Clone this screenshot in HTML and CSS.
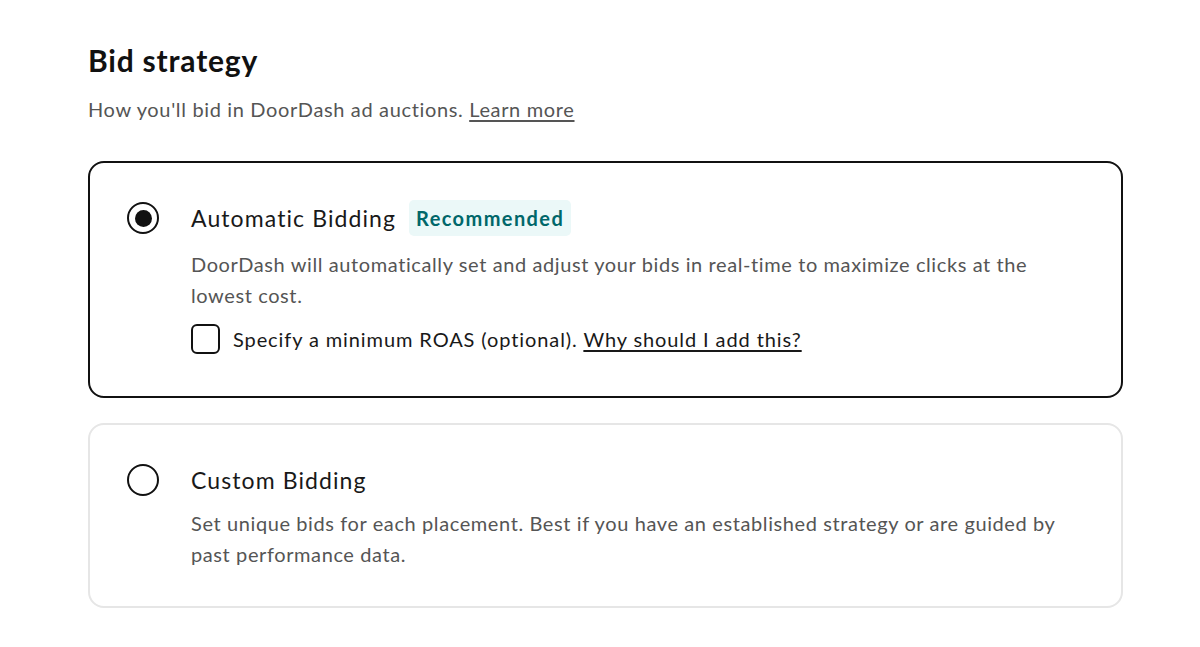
FILE: index.html
```html
<!DOCTYPE html>
<html lang="en">
<head>
  <meta charset="UTF-8">
  <meta name="viewport" content="width=device-width, initial-scale=1.0">
  <title>Bid strategy</title>
  <link rel="stylesheet" href="styles.css">
</head>
<body>
  <div class="section">
    <h1 class="section-title">Bid strategy</h1>
    <p class="section-sub">How you'll bid in DoorDash ad auctions. <a href="#" class="link">Learn more</a></p>

    <div class="option selected">
      <div class="radio checked"><span class="dot"></span></div>
      <div class="option-body">
        <div class="option-head">
          <span class="option-title">Automatic Bidding</span>
          <span class="badge">Recommended</span>
        </div>
        <p class="option-desc">DoorDash will automatically set and adjust your bids in real-time to maximize clicks at the lowest cost.</p>
        <label class="check-row">
          <span class="checkbox"></span>
          <span>Specify a minimum ROAS (optional). <a href="#" class="link dark">Why should I add this?</a></span>
        </label>
      </div>
    </div>

    <div class="option">
      <div class="radio"></div>
      <div class="option-body">
        <div class="option-head">
          <span class="option-title">Custom Bidding</span>
        </div>
        <p class="option-desc">Set unique bids for each placement. Best if you have an established strategy or are guided by past performance data.</p>
      </div>
    </div>
  </div>
</body>
</html>
```

FILE: styles.css
```css
body {
  font-family: 'Lato', 'Open Sans', sans-serif;
  background-color: #fff;
  margin: 0;
  padding: 0;
  color: #191919;
  letter-spacing: 0.65px;
}
.section {
  padding: 42px 77px 0 88px;
}
.section-title {
  margin: 0;
  font-size: 30px;
  font-weight: 700;
  line-height: 36px;
  letter-spacing: 0.8px;
  color: #111;
}
.section-sub {
  margin: 16px 0 37px;
  font-size: 20px;
  line-height: 30px;
  color: #555;
}
.link {
  color: #555;
  text-decoration: underline;
  text-underline-offset: 3px;
}
.link.dark {
  color: #191919;
}
.option {
  display: flex;
  gap: 32px;
  border: 2px solid #e6e6e6;
  border-radius: 16px;
  padding: 37px 37px 36px;
  margin-bottom: 25px;
}
.option.selected {
  border-color: #111;
  padding-bottom: 42px;
}
.radio {
  flex: none;
  width: 32px;
  height: 32px;
  box-sizing: border-box;
  border: 2.5px solid #111;
  border-radius: 50%;
  display: flex;
  align-items: center;
  justify-content: center;
  margin-top: 2px;
}
.radio .dot {
  width: 17px;
  height: 17px;
  border-radius: 50%;
  background: #111;
}
.option-body {
  flex: 1;
}
.option-head {
  display: flex;
  align-items: center;
  gap: 13px;
  height: 36px;
}
.option-title {
  font-size: 23px;
  letter-spacing: 1.1px;
  color: #191919;
}
.badge {
  background: #ebf8f8;
  color: #00676a;
  font-weight: 700;
  font-size: 20px;
  letter-spacing: 1.4px;
  padding: 5px 7px;
  border-radius: 5px;
  line-height: 26px;
}
.option-desc {
  margin: 10px 0 0;
  font-size: 20px;
  line-height: 31px;
  letter-spacing: 0.6px;
  color: #555;
}
.selected .option-desc {
  margin-top: 13px;
}
.check-row {
  display: flex;
  align-items: center;
  gap: 13px;
  margin-top: 13px;
  font-size: 20px;
  letter-spacing: 0.9px;
  color: #191919;
}
.checkbox {
  flex: none;
  width: 29px;
  height: 30px;
  box-sizing: border-box;
  border: 2px solid #111;
  border-radius: 6px;
}
```
